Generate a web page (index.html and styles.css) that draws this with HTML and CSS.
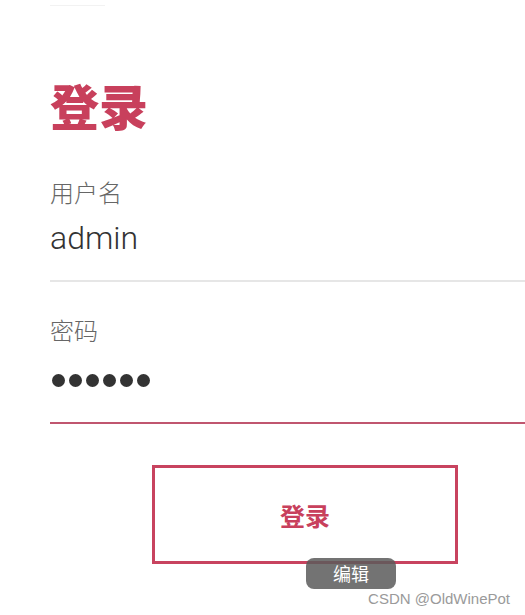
FILE: index.html
```html
<!DOCTYPE html>
<html lang="zh-CN">
<head>
    <meta charset="UTF-8">
    <meta name="viewport" content="width=device-width, initial-scale=1.0">
    <title>登录</title>
    <link rel="stylesheet" href="styles.css">
</head>
<body>

    <div class="login">
        <div class="top-mark"></div>
        <h1 class="title">登录</h1>

        <div class="field">
            <label class="label">用户名</label>
            <div class="value">admin</div>
        </div>

        <div class="field active">
            <label class="label">密码</label>
            <div class="dots">
                <span></span><span></span><span></span><span></span><span></span><span></span>
            </div>
        </div>

        <div class="actions">
            <button class="submit">登录</button>
        </div>
    </div>

    <div class="tip">编辑</div>
    <div class="watermark">CSDN @OldWinePot</div>

</body>
</html>
```

FILE: styles.css
```css
body {
    margin: 0;
    background-color: #fff;
    font-family: "Noto Sans CJK SC", "Noto Sans", sans-serif;
    overflow: hidden;
}
.login {
    padding-left: 50px;
}
.top-mark {
    width: 55px;
    height: 1px;
    margin-top: 5px;
    background-color: #f2f2f2;
}
.title {
    margin: 69px 0 0;
    font-size: 49px;
    line-height: 60px;
    font-weight: 900;
    color: #c8405c;
}
.field {
    border-bottom: 2px solid #e6e6e6;
}
.label {
    display: block;
    margin-top: 42px;
    font-size: 24px;
    line-height: 30px;
    font-weight: 300;
    color: #666;
}
.value {
    margin-top: 11px;
    padding-bottom: 22px;
    font-family: Roboto, "Open Sans", sans-serif;
    font-size: 32px;
    line-height: 40px;
    font-weight: 300;
    color: #333;
}
.active {
    border-bottom-color: #c0566f;
}
.active .label {
    margin-top: 33px;
}
.dots {
    display: flex;
    gap: 4px;
    margin-top: 29px;
    padding: 0 0 35px 2px;
}
.dots span {
    width: 13px;
    height: 13px;
    border-radius: 50%;
    background-color: #333;
}
.actions {
    margin-top: 41px;
    padding-left: 102px;
}
.submit {
    width: 306px;
    height: 99px;
    background-color: #fff;
    border: 3px solid #c8435f;
    font-family: "Noto Sans CJK SC", sans-serif;
    font-size: 25px;
    font-weight: 700;
    color: #c8405c;
}
.tip {
    position: absolute;
    left: 306px;
    top: 558px;
    width: 90px;
    height: 31px;
    border-radius: 8px;
    background-color: rgba(90, 90, 90, 0.85);
    color: #fff;
    font-size: 18px;
    line-height: 31px;
    text-align: center;
}
.watermark {
    position: absolute;
    right: 15px;
    top: 590px;
    font-family: "Liberation Sans", Arial, sans-serif;
    font-size: 15px;
    color: #9a9a9a;
}
```
